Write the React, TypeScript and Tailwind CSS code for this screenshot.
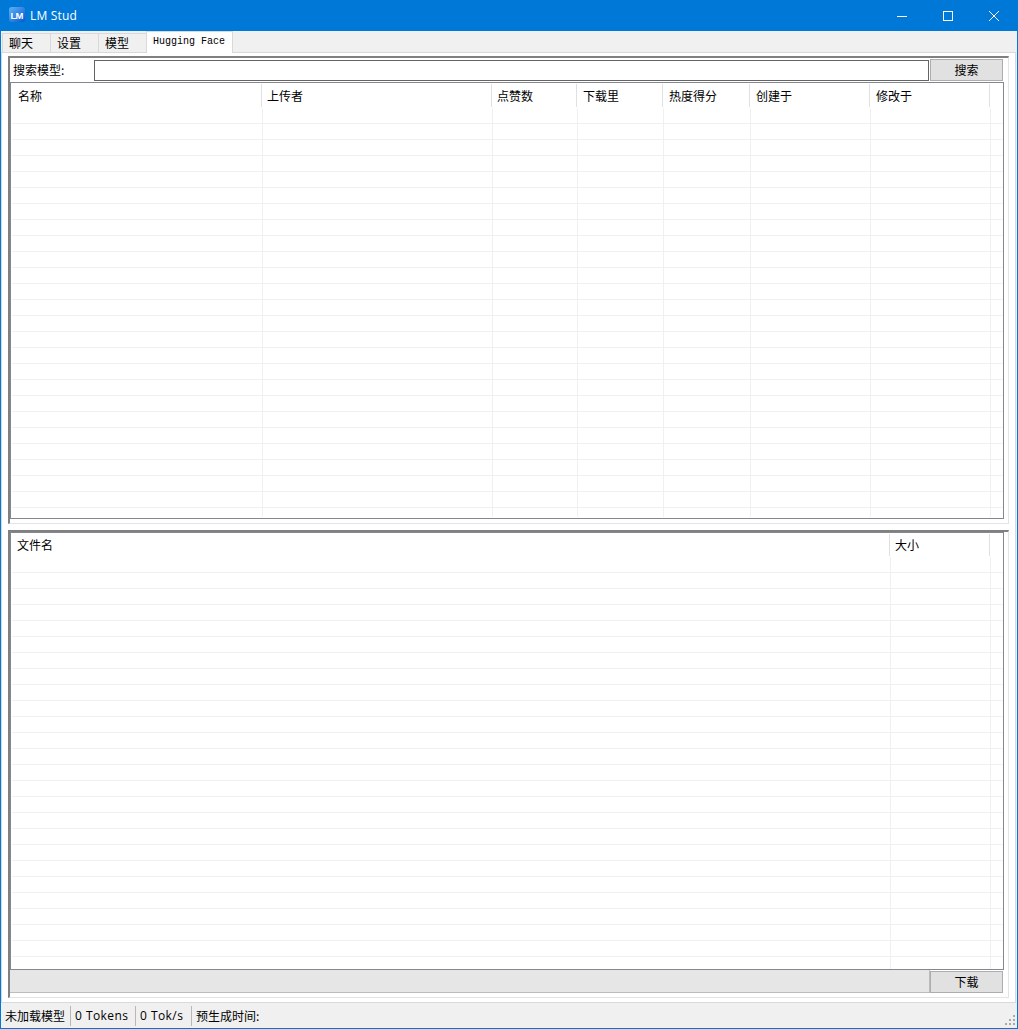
const CJK = "font-['Noto_Sans_CJK_SC','Liberation_Sans',sans-serif]";

const TOP_COLUMNS = [
  { label: '名称', width: 'w-[251px]', pad: 'pl-[7px]' },
  { label: '上传者', width: 'w-[230px]', pad: 'pl-[5px]' },
  { label: '点赞数', width: 'w-[85px]', pad: 'pl-[5px]' },
  { label: '下载里', width: 'w-[86px]', pad: 'pl-[6px]' },
  { label: '热度得分', width: 'w-[87px]', pad: 'pl-[6px]' },
  { label: '创建于', width: 'w-[120px]', pad: 'pl-[6px]' },
  { label: '修改于', width: 'w-[120px]', pad: 'pl-[6px]' },
];

const FILE_COLUMNS = [
  { label: '文件名', width: 'w-[879px]', pad: 'pl-[6px]' },
  { label: '大小', width: 'w-[100px]', pad: 'pl-[5px]' },
];

type Column = { label: string; width: string; pad: string };

function AppIcon() {
  return (
    <svg width="16" height="15" viewBox="0 0 16 15" className="shrink-0">
      <defs>
        <linearGradient id="lm-bg" x1="0" y1="0" x2="1" y2="1">
          <stop offset="0" stopColor="#5db4f5" />
          <stop offset="1" stopColor="#0b55d0" />
        </linearGradient>
      </defs>
      <rect width="16" height="15" rx="3" fill="url(#lm-bg)" />
      <text x="1.5" y="11.5" fontSize="9.5" fontWeight="700" fill="#fff" fontFamily="Liberation Sans, sans-serif" textLength="13">
        LM
      </text>
    </svg>
  );
}

function TitleBar() {
  return (
    <div className="flex h-[30px] items-center bg-[#0078d7] text-white">
      <div className="ml-[8px] mt-[-3px]">
        <AppIcon />
      </div>
      <span className="ml-[5px] mt-[-1px] font-['Open_Sans',sans-serif] text-[12px] tracking-[0.2px]">LM Stud</span>
      <div className="ml-auto flex h-full">
        <div className="flex h-full w-[46px] items-center justify-center">
          <svg width="10" height="10" viewBox="0 0 10 10">
            <path d="M0 5.5h10" stroke="#fff" strokeWidth="1" />
          </svg>
        </div>
        <div className="flex h-full w-[46px] items-center justify-center">
          <svg width="10" height="10" viewBox="0 0 10 10">
            <rect x="0.5" y="0.5" width="9" height="9" fill="none" stroke="#fff" strokeWidth="1" />
          </svg>
        </div>
        <div className="flex h-full w-[46px] items-center justify-center">
          <svg width="10" height="10" viewBox="0 0 10 10">
            <path d="M0 0l10 10M10 0L0 10" stroke="#fff" strokeWidth="1" />
          </svg>
        </div>
      </div>
    </div>
  );
}

function Tabs() {
  return (
    <div className={`flex h-[21px] items-end pl-px text-[12px] text-black ${CJK}`}>
      <div className="flex h-[19px] w-[49px] items-center border-t border-r border-l border-[#d9d9d9] bg-[#f0f0f0] pl-[6px]">
        聊天
      </div>
      <div className="flex h-[19px] w-[48px] items-center border-t border-r border-[#d9d9d9] bg-[#f0f0f0] pl-[6px]">
        设置
      </div>
      <div className="flex h-[19px] w-[48px] items-center border-t border-r border-[#d9d9d9] bg-[#f0f0f0] pl-[6px]">
        模型
      </div>
      <div className="relative z-10 -mb-px -ml-px flex h-[22px] w-[87px] items-center border-t border-r border-l border-[#d9d9d9] bg-white pb-[2px] pl-[6px] font-['Liberation_Mono',monospace] text-[10px]">
        Hugging Face
      </div>
    </div>
  );
}

function GridTable({
  columns,
  headerHeight,
  tableHeight,
  rowsHeight,
}: {
  columns: Column[];
  headerHeight: string;
  tableHeight: string;
  rowsHeight: string;
}) {
  return (
    <div className={`w-[994px] overflow-hidden border border-[#828790] bg-white text-[12px] text-black ${tableHeight} ${CJK}`}>
      <div className={`flex ${headerHeight}`}>
        {columns.map((col) => (
          <div key={col.label} className={`flex items-center ${col.width} ${col.pad} my-px border-r border-[#e0e0e0]`}>
            {col.label}
          </div>
        ))}
      </div>
      <div className={`ml-px w-[991px] overflow-hidden ${rowsHeight}`}>
        {Array.from({ length: 26 }).map((_, i) => (
          <div key={i} className="flex h-4 border-b border-[#f0f0f0]">
            {columns.map((col) => (
              <div key={col.label} className={`${col.width} border-r border-[#f0f0f0]`} />
            ))}
          </div>
        ))}
      </div>
    </div>
  );
}

function ActionButton({ label }: { label: string }) {
  return (
    <div className="flex h-[22px] w-[73px] items-center justify-center border border-[#adadad] bg-[#e1e1e1] text-[12px] text-black">
      {label}
    </div>
  );
}

function SearchPane() {
  return (
    <div className="h-[468px] border-t-2 border-r border-b border-l-2 border-t-[#808080] border-r-[#e3e3e3] border-b-[#e3e3e3] border-l-[#808080] pt-px">
      <div className={`flex h-[23px] text-[12px] text-black ${CJK}`}>
        <div className="flex h-[22px] w-[84px] items-center pl-[3px]">搜索模型:</div>
        <div className="mt-px h-[21px] w-[835px] border border-[#646464] bg-white" />
        <div className="ml-px">
          <ActionButton label="搜索" />
        </div>
      </div>
      <GridTable columns={TOP_COLUMNS} headerHeight="h-[25px]" tableHeight="h-[437px]" rowsHeight="h-[409px]" />
    </div>
  );
}

function FilePane() {
  return (
    <div className="mt-[6px] h-[468px] border-t-2 border-r border-b border-l-2 border-t-[#808080] border-r-[#e3e3e3] border-b-[#e3e3e3] border-l-[#808080]">
      <GridTable columns={FILE_COLUMNS} headerHeight="h-[24px]" tableHeight="h-[438px]" rowsHeight="h-[412px]" />
      <div className={`flex h-[23px] ${CJK}`}>
        <div className="w-[920px] border-r border-b border-[#bcbcbc] bg-[#e6e6e6]" />
        <div className="mt-px">
          <ActionButton label="下载" />
        </div>
      </div>
    </div>
  );
}

function StatusBar() {
  return (
    <div className={`flex h-[25px] items-center bg-[#f0f0f0] text-[12px] text-black ${CJK}`}>
      <div className="flex h-[20px] w-[70px] items-center border-r border-[#b8b8b8] pl-[4px]">未加载模型</div>
      <div className="flex h-[20px] w-[65px] items-center border-r border-[#b8b8b8] pl-[4px] font-['Open_Sans',sans-serif] tracking-[0.45px]">
        0 Tokens
      </div>
      <div className="flex h-[20px] w-[56px] items-center border-r border-[#b8b8b8] pl-[4px] font-['Open_Sans',sans-serif] tracking-[0.45px]">
        0 Tok/s
      </div>
      <div className="pl-[4px]">预生成时间:</div>
      <svg width="11" height="11" viewBox="0 0 11 11" className="mt-auto ml-auto mr-[1px] mb-[2px]" fill="#a9a9a9">
        <rect x="8" y="0" width="2" height="2" />
        <rect x="4" y="4" width="2" height="2" />
        <rect x="8" y="4" width="2" height="2" />
        <rect x="0" y="8" width="2" height="2" />
        <rect x="4" y="8" width="2" height="2" />
        <rect x="8" y="8" width="2" height="2" />
      </svg>
    </div>
  );
}

export default function App() {
  return (
    <div className="h-[1029px] w-[1018px] overflow-hidden border border-[#0078d7] bg-[#f0f0f0]">
      <TitleBar />
      <Tabs />
      <div className="h-[951px] w-[1015px] border border-[#d9d9d9] bg-white px-[6px] pt-[3px]">
        <SearchPane />
        <FilePane />
      </div>
      <StatusBar />
    </div>
  );
}
